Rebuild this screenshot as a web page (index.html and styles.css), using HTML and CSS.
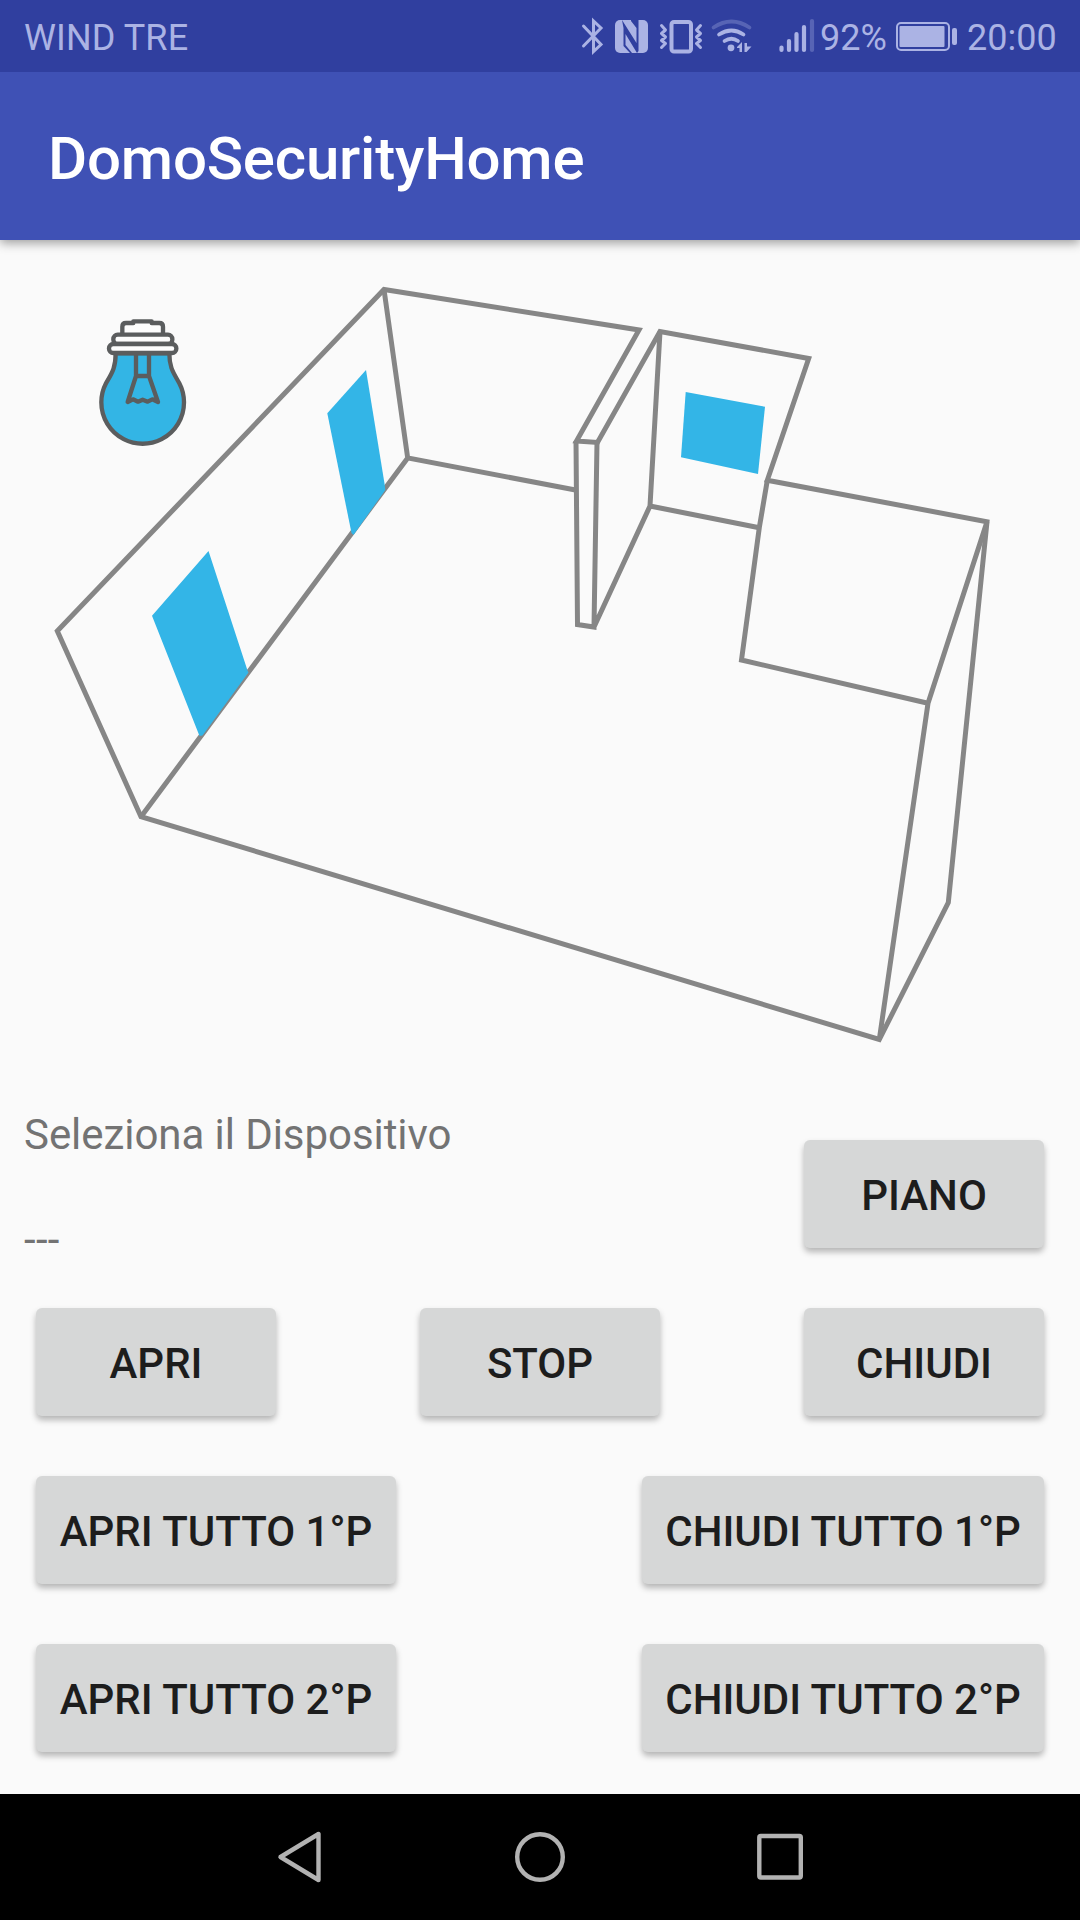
FILE: index.html
```html
<!DOCTYPE html>
<html lang="it">
<head>
<meta charset="utf-8">
<title>DomoSecurityHome</title>
<link rel="stylesheet" href="styles.css">
</head>
<body>
<div class="screen">
  <div class="status-bar">
    <span class="carrier">WIND TRE</span>
    <svg viewBox="576 0 33 72"><path d="M583.500 26L601 44.500L593.500 51.500V21L601 28L583.500 46" fill="none" stroke="currentColor" stroke-width="3" stroke-linecap="round" stroke-linejoin="miter"/></svg>
    <svg viewBox="609 0 45 72"><rect x="615" y="20" width="33" height="33" rx="5" fill="currentColor"/><path d="M622 20L636.500 43V28L631 21V20H638.500V51L637 53L625.500 34V45L632 53H630L623.500 46V28Z" class="cut"/></svg>
    <svg viewBox="654 0 54 72"><g fill="none" stroke="currentColor" stroke-linecap="round" stroke-linejoin="round"><rect x="671.500" y="22" width="19.500" height="29.500" rx="2.500" stroke-width="4"/><path d="M661.500 25.500L665.500 30L661.500 33.500L665.500 37L661.500 40.500L665.500 43.500L661.500 47.500M700.500 25.500L696.500 30L700.500 33.500L696.500 37L700.500 40.500L696.500 43.500L700.500 47.500" stroke-width="3"/></g></svg>
    <svg viewBox="708 0 54 72"><g fill="none" stroke="currentColor" stroke-width="3.700" stroke-linecap="round"><path d="M713.500 27.500Q731.500 15.500 749.500 27.500" opacity=".32"/><path d="M719 34.500Q731.500 26.500 743.500 34.500"/><path d="M724.500 41Q731.500 36.500 738 41"/></g><circle cx="731" cy="47.800" r="3.400" fill="currentColor"/><path d="M737 47L742 42V52H739.500V48H737ZM744.500 43H747V46.500H751.500L746.500 52H744.500Z" fill="currentColor"/></svg>
    <svg viewBox="762 0 58 72"><g stroke="currentColor" stroke-width="4.200" stroke-linecap="round"><path d="M781.500 47.500V50M789 41V50M796.500 34V50M804 27V50"/><path d="M812 21V50" opacity=".32"/></g></svg>
    <span class="percent">92%</span>
    <svg viewBox="892 0 70 72"><rect x="897" y="23" width="52" height="27" rx="4" fill="none" stroke="currentColor" stroke-width="2"/><rect x="899.500" y="26" width="45" height="21" rx="1" fill="currentColor"/><rect x="952" y="28" width="5" height="17" rx="2" fill="currentColor"/></svg>
    <span class="clock">20:00</span>
  </div>
  <header class="app-bar"><h1>DomoSecurityHome</h1></header>
  <main class="content">
    <svg class="plan" viewBox="0 240 1080 852">
      <g class="walls">
        <path d="M57.300 631L384 289.500L639 330L576.500 441L597.500 442.500L660 331.500L808.700 358.500L767.300 480.300L987 521.700L948.300 902.500L879.300 1039.500L141 816.700Z"/>
        <path d="M384 289.500L407.700 458L575.500 490M407.700 458L141 816.700"/>
        <path d="M576 441L577.500 624.500L594 627L597 442.500M594 627L650 506L660 331.500M650 506L759.300 527.700"/>
        <path d="M767.300 480.300L759.300 527.700L741.500 660L928 703.300L987 521.700M928 703.300L879.300 1039.500"/>
      </g>
      <g class="window">
        <path d="M208.500 551L152 615.700L199.500 736L202.500 735.500L248.500 672.500L247.500 670.500Z"/>
        <path d="M366 370L327.300 413.300L351.500 533L353.500 535L385.300 490L384.500 483.500Z"/>
        <path d="M685.700 392L765 406.700L758 474L681 457.300Z"/>
      </g>
      <g class="bulb" transform="translate(80 300) scale(.33333)">
        <path class="glass" d="M107 160C107 205 95 220 78 250A124 124 0 1 0 298 250C282 220 268 205 268 160Z"/>
        <path d="M168 160V228H207V160M168 228L143 306L159 298L174 305L188 299L203 305L217 298L234 306L207 228"/>
        <path class="cap" d="M127 99V80Q127 69 138 69H160V64H215V69H238Q249 69 249 80V99"/>
        <rect class="cap" x="100" y="104" width="177" height="28" rx="13"/>
        <rect class="cap" x="87" y="132" width="202" height="27" rx="13"/>
      </g>
    </svg>
    <section class="controls">
      <div class="selection">
        <div class="labels"><p>Seleziona il Dispositivo</p><p class="device">---</p></div>
        <button class="btn">PIANO</button>
      </div>
      <div class="row"><button class="btn">APRI</button><button class="btn">STOP</button><button class="btn">CHIUDI</button></div>
      <div class="row"><button class="btn open-all">APRI TUTTO 1°P</button><button class="btn close-all">CHIUDI TUTTO 1°P</button></div>
      <div class="row"><button class="btn open-all">APRI TUTTO 2°P</button><button class="btn close-all">CHIUDI TUTTO 2°P</button></div>
    </section>
  </main>
  <nav class="nav-bar">
    <svg viewBox="270 1827 60 60"><path d="M280.500 1857L318.500 1834V1880Z"/></svg>
    <svg viewBox="510 1827 60 60"><circle cx="540" cy="1857" r="22.800"/></svg>
    <svg viewBox="750 1827 60 60"><rect x="759.300" y="1836" width="41.500" height="41.500" rx="1.500"/></svg>
  </nav>
</div>
</body>
</html>
```
FILE: styles.css
```css
* { box-sizing: border-box; }
body { margin: 0; font-family: Roboto, "Liberation Sans", sans-serif; }
h1, p { margin: 0; }
svg { display: block; }

.screen {
  width: 1080px;
  height: 1920px;
  display: flex;
  flex-direction: column;
  background: #fafafa;
}

.status-bar {
  position: relative;
  z-index: 1;
  height: 72px;
  display: grid;
  grid-template-columns: 576px 33px 45px 54px 54px 58px 72px 70px 118px;
  background: #303f9f;
  color: #abb3e4;
  font-size: 36px;
  line-height: 77px;
  white-space: nowrap;
}
.status-bar svg { width: 100%; height: 72px; }
.status-bar .cut { fill: #303f9f; }
.carrier { padding-left: 24px; letter-spacing: .1px; }
.clock { padding-left: 5px; }

.app-bar {
  height: 168px;
  padding: 5px 48px 0;
  display: flex;
  align-items: center;
  background: #3f51b5;
  color: #fff;
  box-shadow: 0 3px 10px rgba(0, 0, 0, .38);
}
.app-bar h1 { font-size: 60px; font-weight: 500; letter-spacing: -.2px; }

.content { height: 1554px; display: flex; flex-direction: column; }
.plan { width: 1080px; height: 852px; }
.walls { fill: none; stroke: #868686; stroke-width: 5; stroke-linejoin: miter; }
.window { fill: #33b5e7; }
.bulb { fill: none; stroke: #5b5d5e; stroke-width: 13; stroke-linejoin: round; }
.bulb .glass { fill: #33b5e5; }
.bulb .cap { fill: #fdfdfd; }

.controls {
  padding: 0 36px;
  display: flex;
  flex-direction: column;
  gap: 60px;
}
.selection { height: 156px; display: flex; justify-content: space-between; align-items: flex-end; }
.labels {
  height: 156px;
  margin-left: -12px;
  padding-top: 18px;
  color: #737373;
  font-size: 42px;
  line-height: 50px;
  letter-spacing: -.06px;
}
.labels .device { margin-top: 55px; letter-spacing: .3px; }
.row { display: flex; justify-content: space-between; }

.btn {
  width: 240px;
  height: 108px;
  padding: 3px 0 0;
  border: 0;
  border-radius: 6px;
  background: #d6d7d7;
  color: #1d1d1d;
  font: 500 42px Roboto, "Liberation Sans", sans-serif;
  white-space: nowrap;
  box-shadow: 0 4px 6px rgba(0, 0, 0, .28);
}
.open-all { width: 360px; }
.close-all { width: 402px; }

.nav-bar {
  height: 126px;
  display: flex;
  justify-content: center;
  align-items: center;
  gap: 180px;
  background: #000;
}
.nav-bar svg {
  width: 60px;
  height: 60px;
  fill: none;
  stroke: #b2b2b2;
  stroke-width: 4.4;
  stroke-linejoin: round;
}
```
